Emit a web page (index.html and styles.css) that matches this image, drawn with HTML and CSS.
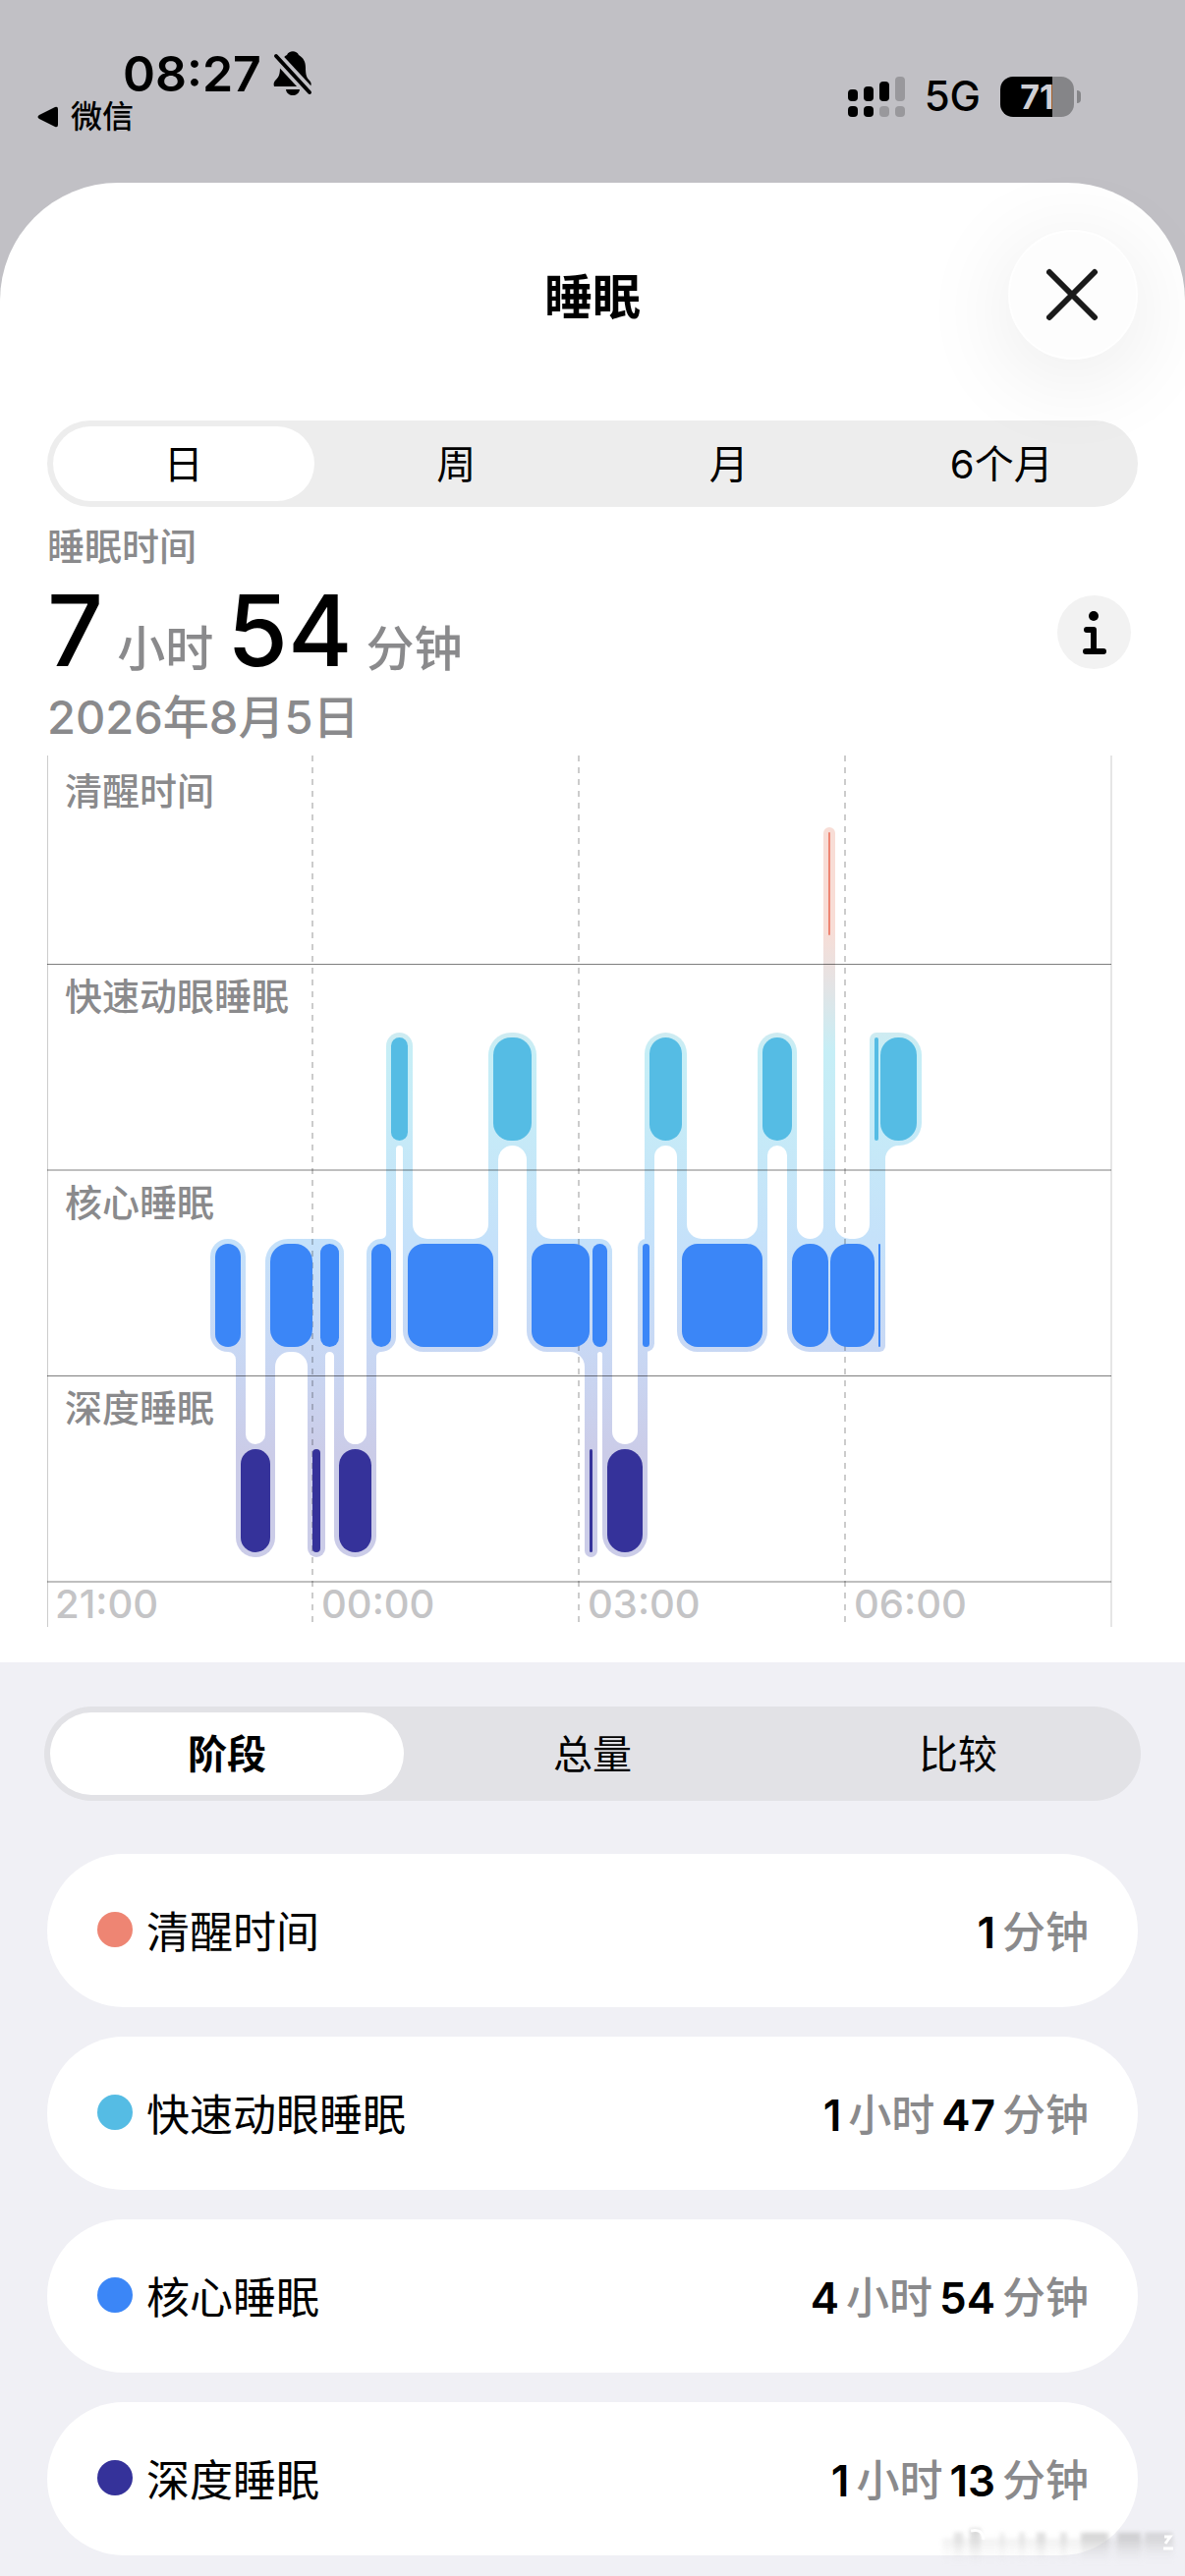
FILE: index.html
```
<!DOCTYPE html>
<html lang="zh-CN">
  <head>
    <meta charset="UTF-8" />
    <meta name="viewport" content="width=device-width, initial-scale=1.0" />
    <title>睡眠</title>
    <link rel="stylesheet" href="styles.css">
  </head>
  <body>
    <div class="status-bar">
      <div class="status-left">
        <div class="status-time">
          <span>08:27</span>
          <svg class="bell-icon" viewBox="0 0 40 46" aria-hidden="true">
            <path d="M1 36C0 33 1 31 3 29C6 26 7 23 7 16C7 10 10 6 14 4C16 -1 24 -1 26 4C31 7 33 11 33 17C33 24 34 27 37 30C39 32 39 34 38 36Z" />
            <path d="M13 39H27C26 47 14 47 13 39Z" />
            <path class="bell-gap" d="M1 3L38 43" />
            <path class="bell-slash" d="M3 5L37 42" />
          </svg>
        </div>
        <a class="back-link" href="#">
          <svg class="back-icon" viewBox="0 0 22 22" aria-hidden="true">
            <path d="M2 9L18 1Q21 0 21 3V19Q21 22 18 21L2 13Q-1 11 2 9Z" />
          </svg>
          <span>微信</span>
        </a>
      </div>
      <div class="status-right">
        <svg class="signal-icon" viewBox="0 0 58 41" aria-hidden="true">
          <rect x="0" y="13" width="10" height="12" rx="4" />
          <rect x="16" y="10" width="10" height="15" rx="4" />
          <rect x="32" y="5" width="10" height="20" rx="4" />
          <rect class="dim" x="48" y="0" width="10" height="25" rx="4" />
          <rect x="0" y="30" width="10" height="11" rx="4" />
          <rect x="16" y="30" width="10" height="11" rx="4" />
          <rect class="dim" x="32" y="30" width="10" height="11" rx="4" />
          <rect class="dim" x="48" y="30" width="10" height="11" rx="4" />
        </svg>
        <span class="network">5G</span>
        <div class="battery">
          <span class="battery-level">71</span>
        </div>
      </div>
    </div>

    <main class="sheet">
      <header class="sheet-header">
        <h1>睡眠</h1>
        <button class="close-button" type="button" aria-label="关闭">
          <svg viewBox="0 0 54 54" aria-hidden="true">
            <path d="M3 4L49 50M49 4L3 50" />
          </svg>
        </button>
      </header>

      <nav class="segments range-tabs">
        <button class="segment active" type="button">日</button>
        <button class="segment" type="button">周</button>
        <button class="segment" type="button">月</button>
        <button class="segment" type="button">6个月</button>
      </nav>

      <section class="summary">
        <div>
          <h2>睡眠时间</h2>
          <p class="total"><b>7</b><span>小时</span><b>54</b><span>分钟</span></p>
          <p class="date">2026年8月5日</p>
        </div>
        <button class="info-button" type="button" aria-label="信息">
          <svg viewBox="0 0 24 46" aria-hidden="true">
            <circle cx="11" cy="6" r="5" />
            <path d="M4 20H11V42M3 42H21" />
          </svg>
        </button>
      </section>

      <!-- Sleep stage chart -->
      <svg class="chart" id="chart" viewBox="0 0 1110 887">
        <defs>
          <linearGradient id="halo" gradientUnits="userSpaceOnUse" x1="0" y1="0" x2="0" y2="887">
            <stop offset="0.2" stop-color="#f8ddd6" />
            <stop offset="0.26" stop-color="#e5e3e4" />
            <stop offset="0.34" stop-color="#c6eef6" />
            <stop offset="0.42" stop-color="#c6ebf7" />
            <stop offset="0.56" stop-color="#c5e1fa" />
            <stop offset="0.67" stop-color="#c8d9f5" />
            <stop offset="0.8" stop-color="#cbcce8" />
          </linearGradient>
        </defs>
        <g id="halos" fill="url(#halo)"></g>
        <g class="rows">
          <path d="M0 212.5H1083M0 422H1083M0 631.5H1083M0 841H1083" />
        </g>
        <path class="edges" d="M0.5 0V887M1083 0V887" />
        <path class="ticks" d="M270 0V887M541 0V887M812 0V887" />
        <g id="bars"></g>
        <g class="row-labels">
          <text x="18" y="50">清醒时间</text>
          <text x="18" y="259">快速动眼睡眠</text>
          <text x="18" y="469">核心睡眠</text>
          <text x="18" y="678">深度睡眠</text>
        </g>
        <g class="hour-labels">
          <text x="8" y="878">21:00</text>
          <text x="279" y="878">00:00</text>
          <text x="550" y="878">03:00</text>
          <text x="821" y="878">06:00</text>
        </g>
      </svg>
    </main>

    <section class="details">
      <nav class="segments stage-tabs">
        <button class="segment active" type="button">阶段</button>
        <button class="segment" type="button">总量</button>
        <button class="segment" type="button">比较</button>
      </nav>
      <ul class="stages">
        <li class="stage">
          <span class="dot awake"></span>
          <span class="stage-name">清醒时间</span>
          <span class="stage-time"><b>1</b>分钟</span>
        </li>
        <li class="stage">
          <span class="dot rem"></span>
          <span class="stage-name">快速动眼睡眠</span>
          <span class="stage-time"><b>1</b>小时<b>47</b>分钟</span>
        </li>
        <li class="stage">
          <span class="dot core"></span>
          <span class="stage-name">核心睡眠</span>
          <span class="stage-time"><b>4</b>小时<b>54</b>分钟</span>
        </li>
        <li class="stage">
          <span class="dot deep"></span>
          <span class="stage-name">深度睡眠</span>
          <span class="stage-time"><b>1</b>小时<b>13</b>分钟</span>
        </li>
      </ul>

      <!-- Faded watermark in the corner -->
      <svg class="watermark" viewBox="0 0 245 48" aria-hidden="true">
        <defs>
          <linearGradient id="fade" x1="0" y1="0" x2="0" y2="1">
            <stop offset="0" stop-color="#aaa" stop-opacity="0.55" />
            <stop offset="1" stop-color="#ddd" stop-opacity="0" />
          </linearGradient>
        </defs>
        <g class="smear" fill="url(#fade)">
          <rect x="4" y="16" width="236" height="26" opacity="0.3" />
          <rect x="16" y="10" width="9" height="30" opacity="0.7" />
          <rect x="32" y="6" width="11" height="36" />
          <rect x="62" y="10" width="6" height="32" opacity="0.4" />
          <rect x="82" y="10" width="6" height="30" opacity="0.6" />
          <rect x="100" y="10" width="9" height="30" opacity="0.8" />
          <rect x="124" y="10" width="7" height="30" opacity="0.7" />
          <rect x="145" y="10" width="28" height="30" />
          <rect x="182" y="10" width="24" height="30" />
          <rect x="210" y="10" width="28" height="26" opacity="0.8" />
        </g>
        <path class="mark" d="M33 8Q45 5 46 17M230 14H236L231 21M229 26H239" />
      </svg>
    </section>

    <script>
      const SVG_NS = "http://www.w3.org/2000/svg";
      const BAR_HEIGHT = 105;
      const PAD = 5;
      const RADIUS = 18;
      const levels = { awake: 78, rem: 287, core: 497, deep: 706 };

      // Each entry is a stage and where it ends, the next one starts there
      const start = 171;
      const night = [
        ["core", 197], ["deep", 227], ["core", 270], ["deep", 278],
        ["core", 297], ["deep", 330], ["core", 350], ["rem", 367],
        ["core", 454], ["rem", 493], ["core", 552], ["deep", 555],
        ["core", 570], ["deep", 606], ["core", 613], ["rem", 646],
        ["core", 728], ["rem", 758], ["core", 795], ["awake", 797],
        ["core", 842], ["rem", 846], ["core", 848], ["rem", 885],
      ];

      const halos = document.getElementById("halos");
      const bars = document.getElementById("bars");

      function add(parent, name, attrs) {
        const el = document.createElementNS(SVG_NS, name);
        for (const key in attrs) el.setAttribute(key, attrs[key]);
        parent.appendChild(el);
      }

      // Inner curve where a connector at x meets the edge of a bar
      function addFillet(x, seg, dir, edge, side) {
        const r = Math.max(0, Math.min(15, (seg.end - seg.x) / 2 - PAD));
        const mid = seg.y + BAR_HEIGHT / 2;
        const inner = x + dir * PAD;
        const sweep = dir * side > 0 ? 1 : 0;
        add(halos, "path", {
          d: `M${x} ${mid}V${edge + side * r}H${inner}
              A${r} ${r} 0 0 ${sweep} ${inner + dir * r} ${edge}V${mid}Z`,
        });
      }

      let x = start;
      const segs = night.map(([stage, end]) => {
        const seg = { stage, x, end, y: levels[stage] };
        x = end;
        return seg;
      });

      segs.forEach((seg, i) => {
        const width = seg.end - seg.x;
        // Wide bars keep tighter corners than the pill shaped ones
        const radius = width > 50 ? 16 : Math.min(width / 2, RADIUS);
        add(halos, "rect", {
          x: seg.x - PAD,
          y: seg.y - PAD,
          width: width + PAD * 2,
          height: BAR_HEIGHT + PAD * 2,
          rx: radius + PAD,
        });
        add(bars, "rect", {
          class: seg.stage,
          x: seg.x,
          y: seg.y,
          width: width,
          height: BAR_HEIGHT,
          rx: radius,
        });

        const next = segs[i + 1];
        if (!next) return;
        const upper = seg.y < next.y ? seg : next;
        const lower = seg.y < next.y ? next : seg;
        add(halos, "rect", {
          x: seg.end - PAD,
          y: upper.y + BAR_HEIGHT / 2,
          width: PAD * 2,
          height: lower.y - upper.y,
        });
        const upperDir = upper === seg ? -1 : 1;
        addFillet(seg.end, upper, upperDir, upper.y + BAR_HEIGHT + PAD, 1);
        addFillet(seg.end, lower, -upperDir, lower.y - PAD, -1);

        // Join two bars of one stage when the gap is smaller than their halos
        const after = segs[i + 2];
        if (after && next.end - next.x < PAD * 2 && after.y === seg.y) {
          const left = Math.max(seg.end - RADIUS, (seg.x + seg.end) / 2);
          const right = Math.min(after.x + RADIUS, (after.x + after.end) / 2);
          add(halos, "rect", {
            x: left,
            y: next.y > seg.y ? seg.y - PAD : seg.y + BAR_HEIGHT / 2,
            width: right - left,
            height: BAR_HEIGHT / 2 + PAD,
          });
        }
      });
    </script>
  </body>
</html>
```
FILE: styles.css
```
* {
  box-sizing: border-box;
}

body {
  margin: 0;
  background-color: #c1c0c5;
  color: #000;
  font-family: Inter, "Noto Sans CJK SC", sans-serif;
}

h1,
h2,
p,
ul {
  margin: 0;
  padding: 0;
}

button {
  border: none;
  padding: 0;
  background: none;
  color: inherit;
  font-family: inherit;
  cursor: pointer;
}

/* Status bar */
.status-bar {
  display: flex;
  justify-content: space-between;
  height: 186px;
  padding: 50px 113px 0 38px;
}

.status-time {
  display: flex;
  align-items: center;
  gap: 12px;
  height: 50px;
  padding-left: 87px;
  font-size: 50px;
  font-weight: 600;
}

.bell-icon {
  width: 40px;
  height: 46px;
}

.bell-gap {
  stroke: #c1c0c5;
  stroke-width: 11;
}

.bell-slash {
  stroke: #000;
  stroke-width: 4;
  stroke-linecap: round;
}

.back-link {
  display: flex;
  align-items: center;
  gap: 12px;
  height: 38px;
  color: #000;
  font-size: 32px;
  font-weight: 500;
  line-height: 38px;
  text-decoration: none;
}

.back-icon {
  width: 22px;
  height: 22px;
}

.status-right {
  display: flex;
  align-items: center;
  gap: 20px;
  height: 96px;
}

.signal-icon {
  width: 58px;
  height: 41px;
}

.dim {
  fill: #99989c;
}

.network {
  font-size: 42px;
  font-weight: 500;
  line-height: 42px;
}

.battery {
  position: relative;
  width: 75px;
  height: 41px;
  border-radius: 13px;
  background: linear-gradient(to right, #000 71%, #858588 71%);
  text-align: center;
}

.battery::after {
  content: "";
  position: absolute;
  top: 14px;
  right: -7px;
  width: 4px;
  height: 13px;
  border-radius: 0 6px 6px 0;
  background-color: #858588;
}

.battery-level {
  color: #d0cfd4;
  font-size: 34px;
  font-weight: 700;
  line-height: 41px;
}

/* Sheet */
.sheet {
  padding: 48px 48px 36px;
  border-radius: 120px 120px 0 0;
  background-color: #fff;
}

.sheet-header {
  display: grid;
  grid-template-columns: 132px 1fr 132px;
  align-items: center;
  margin-bottom: 62px;
}

.sheet-header h1 {
  grid-column: 2;
  padding-bottom: 4px;
  font-size: 49px;
  font-weight: 700;
  text-align: center;
}

.close-button {
  display: grid;
  place-items: center;
  width: 132px;
  height: 132px;
  border: 2px solid #fff;
  border-radius: 50%;
  background-color: #fdfdfd;
  box-shadow: 0 16px 90px 10px rgba(0, 0, 0, 0.07);
}

.close-button svg {
  width: 54px;
  height: 54px;
  fill: none;
  stroke: #1a1a1a;
  stroke-width: 6;
  stroke-linecap: round;
}

.segments {
  display: flex;
  border-radius: 48px;
}

.segment {
  flex: 1;
  padding-bottom: 4px;
  border: 6px solid transparent;
  border-radius: 48px;
  background-clip: padding-box;
  font-size: 40px;
  font-weight: 400;
}

.segment.active {
  background-color: #fff;
}

.range-tabs {
  height: 88px;
  background-color: #ededed;
}

.summary {
  display: flex;
  justify-content: space-between;
  align-items: center;
  padding: 12px 7px 10px 0;
  color: #8a8a8c;
}

.summary h2 {
  font-size: 38px;
  font-weight: 500;
  line-height: 56px;
}

.total {
  display: flex;
  align-items: baseline;
  gap: 14px;
  height: 116px;
  font-size: 49px;
  font-weight: 500;
  line-height: 116px;
}

.total b {
  color: #000;
  font-size: 100px;
  font-weight: 500;
}

.date {
  font-size: 47px;
  font-weight: 500;
  line-height: 59px;
}

.info-button {
  display: grid;
  place-items: center;
  width: 75px;
  height: 75px;
  border-radius: 50%;
  background-color: #f2f2f2;
}

.info-button svg {
  width: 24px;
  height: 46px;
}

.info-button path {
  fill: none;
  stroke: #000;
  stroke-width: 6;
  stroke-linecap: round;
  stroke-linejoin: round;
}

/* Chart */
.chart {
  display: block;
  width: 100%;
  height: auto;
}

.rows,
.edges,
.ticks {
  fill: none;
  stroke: #000;
}

.rows {
  stroke-opacity: 0.5;
}

.edges {
  stroke-opacity: 0.2;
}

.ticks {
  stroke-width: 2;
  stroke-opacity: 0.2;
  stroke-dasharray: 6 6;
}

.row-labels {
  fill: #8a8a8c;
  font-size: 38px;
  font-weight: 500;
}

.hour-labels {
  fill: #c4c4c6;
  font-size: 40px;
  font-weight: 500;
}

.awake {
  fill: #ee8573;
  background-color: #ee8573;
}

.rem {
  fill: #55bce4;
  background-color: #55bce4;
}

.core {
  fill: #3b86f7;
  background-color: #3b86f7;
}

.deep {
  fill: #35329a;
  background-color: #35329a;
}

/* Stage details */
.details {
  position: relative;
  padding: 45px 45px 21px;
  background-color: #f0f0f5;
}

.stage-tabs {
  height: 96px;
  background-color: #e2e2e6;
}

.stage-tabs .active {
  font-weight: 700;
}

.stages {
  display: flex;
  flex-direction: column;
  gap: 30px;
  padding: 54px 3px 0;
  list-style: none;
}

.stage {
  display: flex;
  align-items: center;
  height: 156px;
  padding: 0 50px 2px 51px;
  border-radius: 78px;
  background-color: #fff;
  font-size: 44px;
}

.dot {
  width: 36px;
  height: 36px;
  margin-right: 14px;
  border-radius: 50%;
}

.stage-time {
  margin-left: auto;
  color: #8a8a8c;
  font-weight: 500;
}

.stage-time b {
  margin: 0 7px;
  color: #000;
  font-weight: 600;
}

.watermark {
  position: absolute;
  right: 6px;
  bottom: 6px;
  width: 245px;
  height: 48px;
}

.smear {
  filter: blur(2px);
}

.mark {
  fill: none;
  stroke: #fff;
  stroke-width: 3;
}
```
